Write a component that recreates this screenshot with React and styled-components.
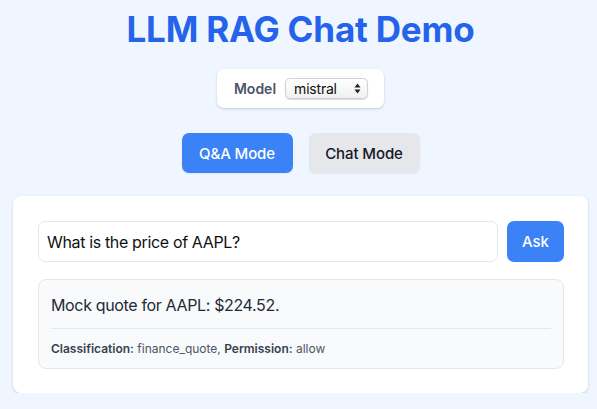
import React, { useState } from "react";
import styled, { createGlobalStyle } from "styled-components";

const GlobalStyle = createGlobalStyle`
  html, body { margin: 0; padding: 0; }
  body {
    background: #eff6ff;
    font-family: Inter, "Noto Sans", sans-serif;
    color: #111827;
  }
  * { box-sizing: border-box; }
`;

const Page = styled.div`
  display: flex;
  flex-direction: column;
  align-items: center;
  padding: 5px 9px 0 13px;
`;

const Title = styled.h1`
  margin: 0;
  font-size: 35px;
  line-height: 48px;
  font-weight: 700;
  color: #2563eb;
  letter-spacing: -0.2px;
`;

const ModelBar = styled.div`
  margin-top: 16px;
  display: flex;
  align-items: center;
  gap: 9px;
  padding: 9px 16px 9px 17px;
  background: #ffffff;
  border-radius: 7px;
  box-shadow: 0 1px 3px rgba(0, 0, 0, 0.12), 0 1px 2px rgba(0, 0, 0, 0.06);
`;

const Label = styled.label`
  font-size: 14px;
  font-weight: 600;
  color: #4b5563;
`;

const SelectWrap = styled.span`
  position: relative;
  display: inline-flex;
`;

const Select = styled.select`
  appearance: none;
  -webkit-appearance: none;
  width: 83px;
  height: 21px;
  padding: 0 20px 0 8px;
  font-family: Inter, sans-serif;
  font-size: 14px;
  letter-spacing: -0.2px;
  color: #111;
  background: linear-gradient(#ffffff, #f1f1f1);
  border: 1px solid #d1d1d1;
  border-radius: 5px;
  box-shadow: 0 0.5px 1px rgba(0, 0, 0, 0.15);
  outline: none;
`;

const Arrows = styled.svg`
  position: absolute;
  right: 7px;
  top: 5px;
  pointer-events: none;
`;

const ModeRow = styled.div`
  margin-top: 25px;
  display: flex;
  gap: 16px;
`;

const ModeButton = styled.button`
  width: 111px;
  height: 40px;
  border: none;
  border-radius: 7px;
  font-family: Inter, sans-serif;
  font-size: 15px;
  font-weight: 500;
  letter-spacing: -0.1px;
  cursor: pointer;
  background: ${(p) => (p.$active ? "#3b82f6" : "#e5e7eb")};
  color: ${(p) => (p.$active ? "#ffffff" : "#111827")};
  box-shadow: 0 1px 2px rgba(0, 0, 0, 0.06);
`;

const Card = styled.section`
  margin-top: 23px;
  width: 100%;
  background: #ffffff;
  border-radius: 8px;
  padding: 25px 24px 24px 25px;
  box-shadow: 0 1px 3px rgba(0, 0, 0, 0.12), 0 1px 2px rgba(0, 0, 0, 0.06);
`;

const AskRow = styled.div`
  display: flex;
  gap: 9px;
`;

const Input = styled.input`
  flex: 1;
  height: 41px;
  padding: 0 8px;
  font-family: Inter, sans-serif;
  font-size: 16px;
  letter-spacing: -0.35px;
  color: #111;
  border: 1px solid #e5e7eb;
  border-radius: 7px;
  outline: none;
`;

const AskButton = styled.button`
  width: 57px;
  height: 41px;
  border: none;
  border-radius: 7px;
  background: #3b82f6;
  color: #fff;
  font-family: Inter, sans-serif;
  font-size: 15px;
  font-weight: 500;
`;

const Result = styled.div`
  margin-top: 17px;
  background: #f9fafb;
  border: 1px solid #e5e7eb;
  border-radius: 8px;
  padding: 13px 12px 10px;
`;

const Answer = styled.p`
  margin: 0;
  font-size: 16px;
  line-height: 24px;
  letter-spacing: -0.35px;
  color: #1f2937;
`;

const Divider = styled.hr`
  margin: 11px 0 11px;
  border: none;
  border-top: 1px solid #e5e7eb;
`;

const Meta = styled.div`
  font-size: 12px;
  line-height: 18px;
  color: #4b5563;
  b { font-weight: 600; color: #374151; }
`;

export default function App() {
  const [mode, setMode] = useState("qa");
  return (
    <>
      <GlobalStyle />
      <Page>
        <Title>LLM RAG Chat Demo</Title>
        <ModelBar>
          <Label htmlFor="model">Model</Label>
          <SelectWrap>
            <Select id="model" defaultValue="mistral">
              <option value="mistral">mistral</option>
              <option value="llama3">llama3</option>
            </Select>
            <Arrows width="7" height="11" viewBox="0 0 7 11">
              <path d="M3.5 0.5 L6.5 4.5 H0.5 Z" fill="#222" />
              <path d="M3.5 10.5 L6.5 6.5 H0.5 Z" fill="#222" />
            </Arrows>
          </SelectWrap>
        </ModelBar>
        <ModeRow>
          <ModeButton $active={mode === "qa"} onClick={() => setMode("qa")}>Q&amp;A Mode</ModeButton>
          <ModeButton $active={mode === "chat"} onClick={() => setMode("chat")}>Chat Mode</ModeButton>
        </ModeRow>
        <Card>
          <AskRow>
            <Input defaultValue="What is the price of AAPL?" />
            <AskButton>Ask</AskButton>
          </AskRow>
          <Result>
            <Answer>Mock quote for AAPL: $224.52.</Answer>
            <Divider />
            <Meta>
              <b>Classification:</b> finance_quote, <b>Permission:</b> allow
            </Meta>
          </Result>
        </Card>
      </Page>
    </>
  );
}
